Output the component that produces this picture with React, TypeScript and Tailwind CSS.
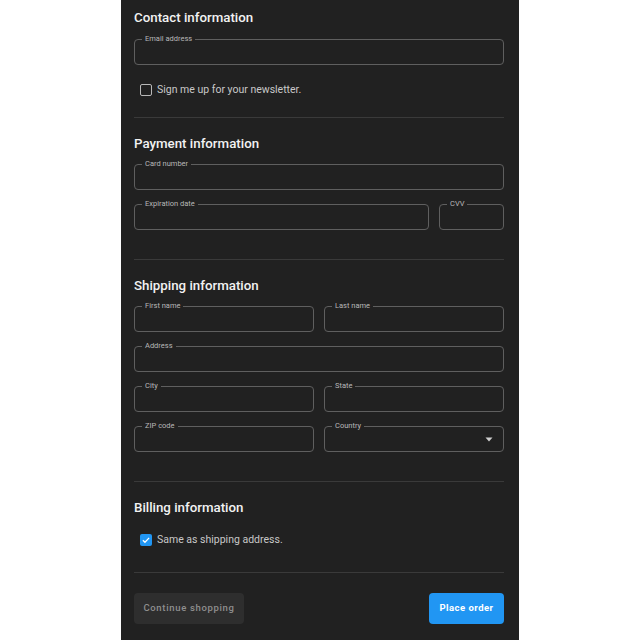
import React, { useState } from 'react';

const font = { fontFamily: 'Roboto, "Liberation Sans", Arial, sans-serif' };

// Outlined text field with the label sitting in a notch of the top border
const Field: React.FC<{ label: string; className?: string; select?: boolean }> = ({ label, className = '', select }) => (
  <div className={`relative h-[26px] rounded-[4px] border border-[#5f5f5f] ${className}`}>
    <span className="absolute -top-[6px] left-[7px] bg-[#212121] px-[3px] text-[7.5px] leading-[10px] text-[#b8b8b8]">
      {label}
    </span>
    {select && (
      <svg className="absolute right-[10px] top-[10px]" width="8" height="5" viewBox="0 0 8 5">
        <path d="M0.5 0.5 L7.5 0.5 L4 4.5 Z" fill="#cfcfcf" />
      </svg>
    )}
  </div>
);

const Checkbox: React.FC<{ checked: boolean; onChange: () => void; label: string; className?: string }> = ({ checked, onChange, label, className = '' }) => (
  <label className={`flex h-[16px] cursor-pointer items-center pl-[6px] ${className}`} onClick={onChange}>
    {checked ? (
      <span className="flex h-[12px] w-[12px] items-center justify-center rounded-[2px] bg-[#2196f3]">
        <svg width="10" height="10" viewBox="0 0 24 24">
          <path d="M4.5 12.5 L9.5 17.5 L19.5 7" fill="none" stroke="#ffffff" strokeWidth="3" />
        </svg>
      </span>
    ) : (
      <span className="h-[12px] w-[12px] rounded-[2px] border-[1.5px] border-[#b8b8b8]" />
    )}
    <span className="ml-[5px] text-[10.5px] text-[#c8c8c8]">{label}</span>
  </label>
);

const Heading: React.FC<{ children: React.ReactNode; className?: string }> = ({ children, className = '' }) => (
  <h2 className={`text-[13.3px] font-medium leading-[18px] text-[#f2f2f2] ${className}`}>{children}</h2>
);

const Divider: React.FC<{ className?: string }> = ({ className = '' }) => (
  <div className={`border-t border-[#3a3a3a] ${className}`} />
);

export default function App() {
  const [newsletter, setNewsletter] = useState(false);
  const [sameAddress, setSameAddress] = useState(true);

  return (
    <div className="min-h-screen bg-white" style={font}>
      <div className="mx-auto flex min-h-[640px] w-[398px] flex-col bg-[#212121] pl-[13px] pr-[15px] pt-[9px] pb-[17px]">
        <Heading>Contact information</Heading>
        <Field label="Email address" className="mt-[12px]" />
        <Checkbox
          checked={newsletter}
          onChange={() => setNewsletter(!newsletter)}
          label="Sign me up for your newsletter."
          className="mt-[17px]"
        />
        <Divider className="mt-[19px]" />

        <Heading className="mt-[17px]">Payment information</Heading>
        <Field label="Card number" className="mt-[11px]" />
        <div className="mt-[14px] flex gap-[10px]">
          <Field label="Expiration date" className="flex-1" />
          <Field label="CVV" className="w-[65px]" />
        </div>
        <Divider className="mt-[29px]" />

        <Heading className="mt-[17px]">Shipping information</Heading>
        <div className="mt-[11px] grid grid-cols-2 gap-x-[10px] gap-y-[14px]">
          <Field label="First name" />
          <Field label="Last name" />
          <Field label="Address" className="col-span-2" />
          <Field label="City" />
          <Field label="State" />
          <Field label="ZIP code" />
          <Field label="Country" select />
        </div>
        <Divider className="mt-[29px]" />

        <Heading className="mt-[17px]">Billing information</Heading>
        <Checkbox
          checked={sameAddress}
          onChange={() => setSameAddress(!sameAddress)}
          label="Same as shipping address."
          className="mt-[15px]"
        />
        <Divider className="mt-[24px]" />

        <div className="mt-[20px] flex items-center justify-between">
          <button className="h-[31px] w-[110px] rounded-[4px] bg-[#2e2e2e] text-[9.5px] font-medium tracking-[0.07em] text-[#8f8f8f]">
            Continue shopping
          </button>
          <button className="h-[31px] w-[75px] rounded-[4px] bg-[#2196f3] text-[9.5px] font-bold tracking-[0.05em] text-white">
            Place order
          </button>
        </div>
      </div>
    </div>
  );
}
